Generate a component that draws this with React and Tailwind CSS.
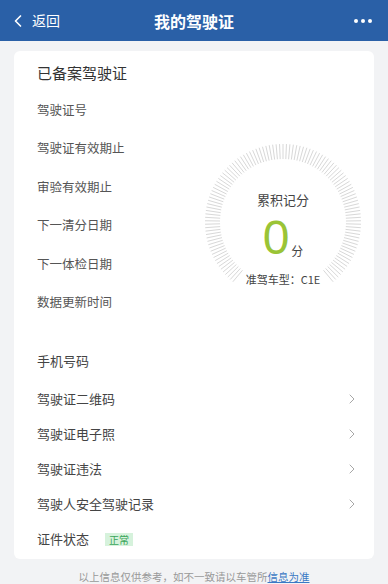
import { ChevronLeft, ChevronRight } from "lucide-react";

const infoRows = [
  "驾驶证号",
  "驾驶证有效期止",
  "审验有效期止",
  "下一清分日期",
  "下一体检日期",
  "数据更新时间",
];

const linkRows = [
  "驾驶证二维码",
  "驾驶证电子照",
  "驾驶证违法",
  "驾驶人安全驾驶记录",
];

// gauge ticks, open at the bottom
function Gauge() {
  const ticks = [];
  const n = 110;
  for (let i = 0; i <= n; i++) {
    const deg = 130 + (280 * i) / n;
    const a = (deg * Math.PI) / 180;
    const r1 = 63;
    const r2 = 78;
    ticks.push(
      <line
        key={i}
        x1={90 + r1 * Math.cos(a)}
        y1={90 + r1 * Math.sin(a)}
        x2={90 + r2 * Math.cos(a)}
        y2={90 + r2 * Math.sin(a)}
        stroke="#d8d8d8"
        strokeWidth="1"
      />
    );
  }
  return (
    <svg width="180" height="180" viewBox="0 0 180 180" className="absolute left-0 top-0">
      {ticks}
    </svg>
  );
}

export default function App() {
  return (
    <div
      className="h-[584px] w-[388px] overflow-hidden bg-[#f2f3f5]"
      style={{ fontFamily: '"Noto Sans CJK SC", "Noto Sans", sans-serif' }}
    >
      {/* Header */}
      <div className="relative flex h-[41px] items-center bg-[#2a60a7] px-2 text-white">
        <div className="flex items-center gap-1">
          <ChevronLeft size={20} strokeWidth={2} />
          <span className="text-[14px]">返回</span>
        </div>
        <div className="absolute left-1/2 -translate-x-1/2 text-[16px] font-bold">
          我的驾驶证
        </div>
        <div className="ml-auto flex gap-[3px] pr-2">
          <span className="h-[4px] w-[4px] rounded-full bg-white" />
          <span className="h-[4px] w-[4px] rounded-full bg-white" />
          <span className="h-[4px] w-[4px] rounded-full bg-white" />
        </div>
      </div>

      {/* Card */}
      <div className="mx-[14px] mt-[10px] rounded-md bg-white pl-[23px] pr-[14px] pb-[2px]">
        <div className="pt-[10px] text-[15px] leading-[24px] text-[#333]">已备案驾驶证</div>

        <div className="relative">
          <div className="flex flex-col pt-[6px]">
            {infoRows.map((r) => (
              <div key={r} className="flex h-[38.5px] items-center text-[12.5px] text-[#555]">
                {r}
              </div>
            ))}
          </div>

          <div className="absolute left-[156px] top-[47px] h-[180px] w-[180px]">
            <Gauge />
            <div className="absolute inset-0 flex flex-col items-center pt-[58px]">
              <div className="text-[13px] text-[#444]">累积记分</div>
              <div className="mt-[4px] flex items-end">
                <span
                  className="text-[48px] leading-[48px] text-[#9ac436]"
                  style={{ fontFamily: '"Liberation Sans", sans-serif', fontWeight: 300 }}
                >
                  0
                </span>
                <span className="mb-[2px] ml-[2px] text-[12px] text-[#444]">分</span>
              </div>
              <div className="mt-[9px] text-[11px] text-[#444]">准驾车型：C1E</div>
            </div>
          </div>
        </div>

        <div className="mt-[18px] flex h-[41px] items-center text-[13px] text-[#444]">手机号码</div>
        {linkRows.map((r) => (
          <div key={r} className="flex h-[35px] items-center justify-between text-[13px] text-[#444]">
            <span>{r}</span>
            <ChevronRight size={16} strokeWidth={1.3} className="text-[#999]" />
          </div>
        ))}
        <div className="flex h-[36px] items-center text-[13px] text-[#444]">
          <span>证件状态</span>
          <span className="ml-[16px] bg-[#d6f2dc] px-[4px] text-[10px] leading-[13px] text-[#3aa55a]">正常</span>
        </div>
      </div>

      <div className="mt-[10px] text-center text-[10.5px] text-[#999]">
        以上信息仅供参考，如不一致请以车管所
        <span className="text-[#3b78c4] underline">信息为准</span>
      </div>
    </div>
  );
}
